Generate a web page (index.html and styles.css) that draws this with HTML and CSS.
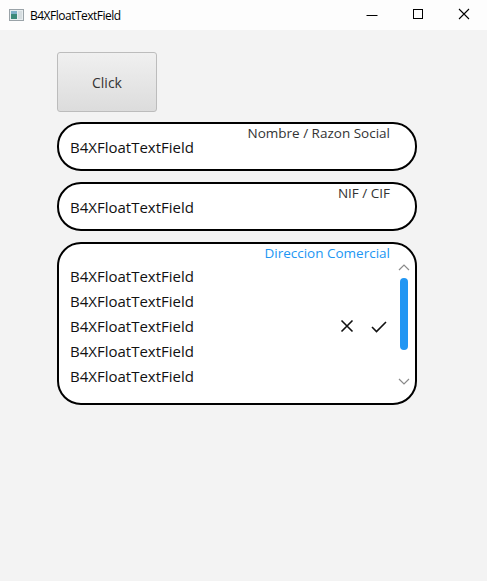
FILE: index.html
```html
<!DOCTYPE html>
<html>
<head>
<meta charset="utf-8">
<link rel="stylesheet" href="styles.css">
</head>
<body>
<div class="titlebar">
  <div class="app">
    <svg class="appicon" width="16" height="14" viewBox="0 0 16 14">
      <rect x="0.5" y="1.5" width="14" height="11" fill="#e8eef0" stroke="#9aa3a8"/>
      <rect x="2" y="3" width="6" height="8" fill="#3c8a7a"/>
      <rect x="2" y="3" width="6" height="3" fill="#7fb0c8"/>
      <rect x="9" y="3" width="4" height="8" fill="#d6dde0"/>
    </svg>
    <span class="apptitle">B4XFloatTextField</span>
  </div>
  <div class="controls">
    <svg class="ctl" width="46" height="30" viewBox="0 0 46 30"><path d="M17.5 15.5h11" stroke="#000" stroke-width="1"/></svg>
    <svg class="ctl" width="46" height="30" viewBox="0 0 46 30"><rect x="18.5" y="9.5" width="9" height="9" fill="none" stroke="#000" stroke-width="1"/></svg>
    <svg class="ctl" width="46" height="30" viewBox="0 0 46 30"><path d="M18 9l10 10M28 9l-10 10" stroke="#000" stroke-width="1.1"/></svg>
  </div>
</div>
<main class="content">
  <button class="btn">Click</button>
  <div class="field">
    <span class="flabel">Nombre / Razon Social</span>
    <span class="fvalue">B4XFloatTextField</span>
  </div>
  <div class="field">
    <span class="flabel">NIF / CIF</span>
    <span class="fvalue">B4XFloatTextField</span>
  </div>
  <div class="area">
    <span class="flabel blue">Direccion Comercial</span>
    <div class="lines">
      <div>B4XFloatTextField</div>
      <div>B4XFloatTextField</div>
      <div>B4XFloatTextField</div>
      <div>B4XFloatTextField</div>
      <div>B4XFloatTextField</div>
    </div>
    <div class="actions">
      <svg width="14" height="14" viewBox="0 0 14 14"><path d="M1.5 1.5l11 11M12.5 1.5l-11 11" stroke="#111" stroke-width="1.6"/></svg>
      <svg width="16" height="13" viewBox="0 0 16 13"><path d="M1 7l4.5 4.5L15 2" fill="none" stroke="#111" stroke-width="1.6"/></svg>
    </div>
    <div class="scroll">
      <svg class="chev" width="12" height="12" viewBox="0 0 12 12"><path d="M1 8l5-5 5 5" fill="none" stroke="#8a8a8a" stroke-width="1.2"/></svg>
      <div class="thumb"></div>
      <div class="spacer"></div>
      <svg class="chev" width="12" height="12" viewBox="0 0 12 12"><path d="M1 4l5 5 5-5" fill="none" stroke="#8a8a8a" stroke-width="1.2"/></svg>
    </div>
  </div>
</main>
</body>
</html>
```

FILE: styles.css
```css
html, body {
  margin: 0;
  padding: 0;
}
body {
  width: 487px;
  height: 581px;
  background: #f3f3f3;
  font-family: "Open Sans", "Noto Sans", sans-serif;
  overflow: hidden;
}
.titlebar {
  height: 30px;
  background: #fdfdfd;
  display: flex;
  align-items: center;
  justify-content: space-between;
}
.app {
  display: flex;
  align-items: center;
  padding-left: 9px;
}
.appicon {
  margin-right: 5px;
}
.apptitle {
  font-size: 12px;
  color: #000;
  letter-spacing: -0.5px;
}
.controls {
  display: flex;
}
.ctl {
  display: block;
}
.content {
  padding: 22px 0 0 57px;
  display: flex;
  flex-direction: column;
  align-items: flex-start;
}
.btn {
  width: 100px;
  height: 60px;
  border: 1px solid #bcbcbc;
  border-radius: 3px;
  background: linear-gradient(#f0f0f0, #dcdcdc);
  font-family: "Open Sans", "Noto Sans", sans-serif;
  font-size: 14px;
  color: #333;
  padding: 0;
  margin-bottom: 10px;
}
.field {
  position: relative;
  box-sizing: border-box;
  width: 360px;
  height: 49px;
  border: 2px solid #000;
  border-radius: 24px;
  background: #fff;
  padding: 0 0 0 11px;
  display: flex;
  align-items: center;
  margin-bottom: 11px;
}
.flabel {
  position: absolute;
  top: 0;
  right: 25px;
  font-size: 13.5px;
  line-height: 18px;
  color: #333;
}
.flabel.blue {
  color: #2196f3;
}
.fvalue {
  font-size: 15px;
  color: #111;
  padding-top: 1px;
}
.area {
  position: relative;
  box-sizing: border-box;
  width: 360px;
  height: 163px;
  border: 2px solid #000;
  border-radius: 24px;
  background: #fff;
  padding: 20px 6px 0 11px;
  display: flex;
  align-items: flex-start;
}
.lines {
  flex: 1;
  font-size: 15px;
  line-height: 25px;
  color: #111;
}
.actions {
  margin-top: 55px;
  display: flex;
  align-items: center;
  gap: 17px;
  margin-right: 12px;
}
.actions svg {
  display: block;
}
.scroll {
  width: 10px;
  margin-top: -2px;
  display: flex;
  flex-direction: column;
  align-items: center;
}
.chev {
  display: block;
}
.thumb {
  width: 8px;
  height: 72px;
  border-radius: 4px;
  background: #2196f3;
  margin-top: 4px;
}
.spacer {
  height: 25px;
}
```
